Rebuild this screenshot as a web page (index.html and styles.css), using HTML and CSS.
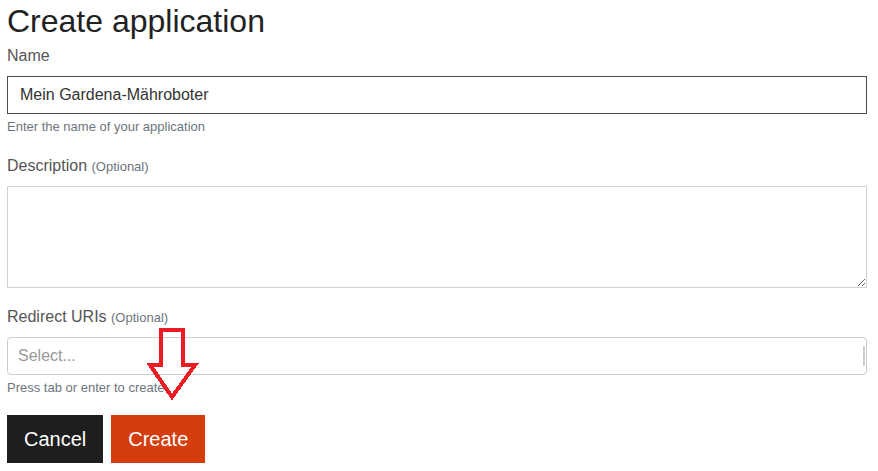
FILE: index.html
```html
<!DOCTYPE html>
<html lang="en">
<head>
    <meta charset="UTF-8">
    <meta name="viewport" content="width=device-width, initial-scale=1.0">
    <title>Create application</title>
    <link rel="stylesheet" href="styles.css">
</head>
<body>
    <div class="container">
        <h1>Create application</h1>

        <div class="field field-name">
            <label for="appName">Name</label>
            <input type="text" id="appName" class="text-input focused" value="Mein Gardena-Mähroboter">
            <div class="help">Enter the name of your application</div>
        </div>

        <div class="field field-description">
            <label for="appDescription">Description <span class="optional">(Optional)</span></label>
            <textarea id="appDescription" class="text-area"></textarea>
        </div>

        <div class="field field-redirect">
            <label>Redirect URIs <span class="optional">(Optional)</span></label>
            <div class="select-box">
                <span class="placeholder">Select...</span>
                <span class="select-bar"></span>
            </div>
            <div class="help">Press tab or enter to create</div>

            <!-- red hint arrow pointing at the Create button -->
            <svg class="hint-arrow" width="56" height="80" viewBox="0 0 56 80">
                <polygon points="15.5,6 38,6 38,41 50,41 27,73 5,41 15.5,41"
                         fill="none" stroke="#ed1c24" stroke-width="4"
                         stroke-linejoin="miter" shape-rendering="crispEdges"/>
            </svg>
        </div>

        <div class="actions">
            <button class="btn btn-cancel">Cancel</button>
            <button class="btn btn-create">Create</button>
        </div>
    </div>
</body>
</html>
```

FILE: styles.css
```css
body {
    margin: 0;
    font-family: "Liberation Sans", Arial, sans-serif;
    background-color: #fff;
    color: #333;
}
.container {
    padding: 0 11px 0 7px;
}
h1 {
    font-size: 32px;
    font-weight: normal;
    line-height: 38px;
    margin: 2px 0 4px;
    color: #222;
}
.field {
    position: relative;
    margin-bottom: 18px;
}
.field-description {
    margin-bottom: 17px;
}
label {
    display: block;
    height: 24px;
    font-size: 16px;
    line-height: 24px;
    color: #555;
    margin-bottom: 8px;
}
.optional {
    font-size: 13px;
    line-height: 1;
    color: #6c757d;
}
.text-input {
    display: block;
    box-sizing: border-box;
    width: 100%;
    height: 38px;
    padding: 0 12px;
    font-family: inherit;
    font-size: 16px;
    color: #333;
    border: 1px solid #ccc;
    border-radius: 0;
    outline: none;
}
.text-input.focused {
    border-color: #474d55;
}
.text-area {
    display: block;
    box-sizing: border-box;
    width: 100%;
    height: 102px;
    padding: 6px 12px;
    font-family: inherit;
    font-size: 16px;
    border: 1px solid #cdd1d7;
    border-radius: 0;
    outline: none;
}
.help {
    font-size: 13px;
    line-height: 18px;
    color: #6c757d;
    margin-top: 4px;
}
.select-box {
    display: flex;
    align-items: center;
    box-sizing: border-box;
    height: 38px;
    padding: 0 1px 0 10px;
    border: 1px solid #ccc;
    border-radius: 4px;
}
.placeholder {
    font-size: 16px;
    color: #999;
}
.select-bar {
    margin-left: auto;
    width: 2px;
    height: 20px;
    background-color: #ccc;
}
.hint-arrow {
    position: absolute;
    left: 138px;
    top: 19px;
}
.actions {
    display: flex;
    gap: 8px;
}
.btn {
    height: 48px;
    padding: 0 17px;
    border: none;
    border-radius: 0;
    font-family: inherit;
    font-size: 20px;
    color: #fff;
    cursor: pointer;
}
.btn-cancel {
    background-color: #1e1e1e;
}
.btn-create {
    background-color: #d43d0d;
}
```
